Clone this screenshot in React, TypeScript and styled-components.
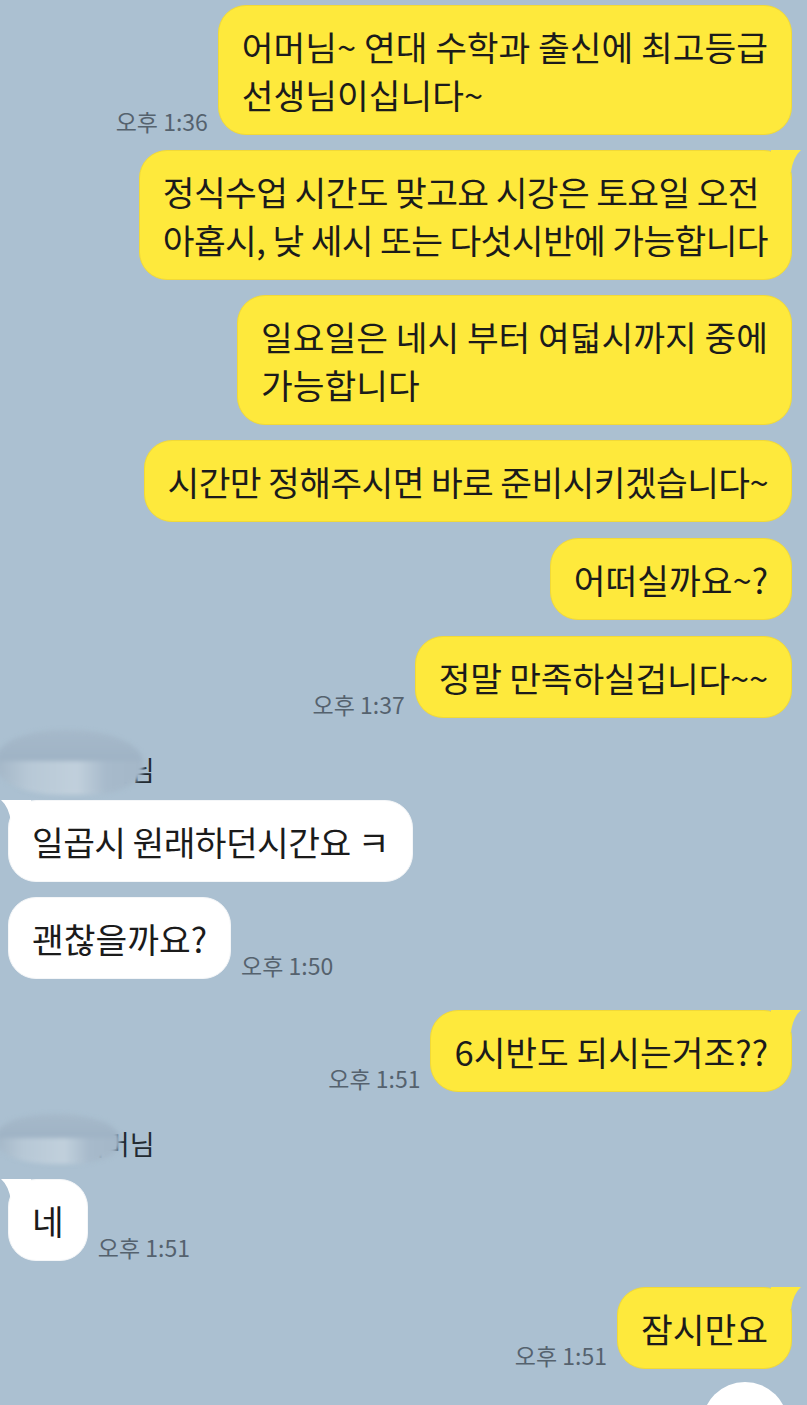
import React from 'react';
import styled, { createGlobalStyle } from 'styled-components';

const chatBg = '#abc0d1';
const yellow = '#fee93c';
const fontStack = `"Noto Sans CJK KR", "Noto Sans", sans-serif`;

const GlobalStyle = createGlobalStyle`
  html, body {
    margin: 0;
    padding: 0;
    background: ${chatBg};
  }
  * {
    box-sizing: border-box;
  }
`;

const Page = styled.div`
  position: relative;
  width: 807px;
  height: 1405px;
  overflow: hidden;
  background: ${chatBg};
  font-family: ${fontStack};
`;

const Chat = styled.div`
  display: flex;
  flex-direction: column;
  padding: 5px 15px 0 8px;
`;

type RowProps = {
  $mine: boolean;
  $top: number;
}
const Row = styled.div<RowProps>`
  display: flex;
  justify-content: ${props => props.$mine ? 'flex-end' : 'flex-start'};
  align-items: flex-end;
  gap: 10px;
  margin-top: ${props => props.$top}px;
`;

type BubbleProps = {
  $mine: boolean;
  $tail: boolean;
  $spacing: number;
}
const Bubble = styled.div<BubbleProps>`
  position: relative;
  padding: 16px 23px;
  border-radius: 28px;
  border: 1px solid ${props => props.$mine ? '#f1d937' : '#f4f6f8'};
  background: ${props => props.$mine ? yellow : '#ffffff'};
  color: #1b1b1b;
  font-size: 34.5px;
  line-height: 48px;
  letter-spacing: ${props => props.$spacing}px;
  white-space: nowrap;

  &::before {
    content: '';
    display: ${props => props.$tail ? 'block' : 'none'};
    position: absolute;
    top: -1px;
    ${props => props.$mine ? 'right: -10px;' : 'left: -8px;'}
    width: 30px;
    height: 22px;
    background: ${props => props.$mine ? yellow : '#ffffff'};
    clip-path: ${props => props.$mine
      ? `path('M0 0 L30 0 Q22 7 20 22 L0 22 Z')`
      : `path('M30 0 L0 0 Q8 7 10 22 L30 22 Z')`
    };
  }
`;

const Time = styled.span`
  flex-shrink: 0;
  font-size: 23px;
  line-height: 28px;
  color: #55626e;
  white-space: nowrap;
`;

type NameRowProps = {
  $top: number;
}
const NameRow = styled.div<NameRowProps>`
  position: relative;
  display: flex;
  align-items: flex-end;
  height: 52px;
  margin-top: ${props => props.$top}px;
  margin-left: -8px;
  padding-left: 80px;
  font-size: 27px;
  line-height: 30px;
  color: #222a31;
`;

type BlurProps = {
  $w: number;
  $top: number;
  $h: number;
}
const NameBlur = styled.div<BlurProps>`
  position: absolute;
  left: -4px;
  top: ${props => props.$top}px;
  width: ${props => props.$w}px;
  height: ${props => props.$h}px;
  border-radius: 45% 50% 40% 45%;
  background:
    linear-gradient(90deg, #a3b6c7 0%, #b7c8d6 22%, #c1d0dc 55%, #a7bacb 75%, #a4b7c8 100%) bottom / 100% 52% no-repeat,
    linear-gradient(180deg, #a6b9ca 0%, #9fb3c5 100%) top / 100% 50% no-repeat;
  filter: blur(2px);
`;

const ScrollButton = styled.div`
  position: absolute;
  left: 702px;
  top: 1382px;
  width: 86px;
  height: 86px;
  border-radius: 50%;
  background: #ffffff;
`;

type Msg = {
  mine: boolean;
  lines: string[];
  top: number;
  tail?: boolean;
  time?: string;
  spacing?: number;
  name?: { top: number; blurW: number; blurTop: number; blurH: number };
}

const messages: Msg[] = [
  { mine: true, top: 0, lines: ['어머님~ 연대 수학과 출신에 최고등급', '선생님이십니다~'], time: '오후 1:36' },
  { mine: true, top: 15, tail: true, spacing: -0.6, lines: ['정식수업 시간도 맞고요 시강은 토요일 오전', '아홉시, 낮 세시 또는 다섯시반에 가능합니다'] },
  { mine: true, top: 15, lines: ['일요일은 네시 부터 여덟시까지 중에', '가능합니다'] },
  { mine: true, top: 15, spacing: -0.6, lines: ['시간만 정해주시면 바로 준비시키겠습니다~'] },
  { mine: true, top: 16, lines: ['어떠실까요~?'] },
  { mine: true, top: 16, spacing: -0.2, lines: ['정말 만족하실겁니다~~'], time: '오후 1:37' },
  { mine: false, top: 15, tail: true, spacing: -0.6, lines: ['일곱시 원래하던시간요 ㅋ'], name: { top: 15, blurW: 147, blurTop: -3, blurH: 65 } },
  { mine: false, top: 15, lines: ['괜찮을까요?'], time: '오후 1:50' },
  { mine: true, top: 31, tail: true, lines: ['6시반도 되시는거조??'], time: '오후 1:51' },
  { mine: false, top: 20, tail: true, lines: ['네'], time: '오후 1:51', name: { top: 15, blurW: 124, blurTop: 7, blurH: 50 } },
  { mine: true, top: 26, tail: true, lines: ['잠시만요'], time: '오후 1:51' },
];

export default function App() {
  return (
    <Page>
      <GlobalStyle />
      <Chat>
        {messages.map((m, i) => (
          <React.Fragment key={i}>
            {m.name && (
              <NameRow $top={m.name.top}>
                어머님
                <NameBlur $w={m.name.blurW} $top={m.name.blurTop} $h={m.name.blurH} />
              </NameRow>
            )}
            <Row $mine={m.mine} $top={m.top}>
              {m.mine && m.time && <Time>{m.time}</Time>}
              <Bubble $mine={m.mine} $tail={!!m.tail} $spacing={m.spacing ?? 0}>
                {m.lines.map((line, j) => (
                  <React.Fragment key={j}>
                    {j > 0 && <br />}
                    {line}
                  </React.Fragment>
                ))}
              </Bubble>
              {!m.mine && m.time && <Time>{m.time}</Time>}
            </Row>
          </React.Fragment>
        ))}
      </Chat>
      <ScrollButton />
    </Page>
  );
}
